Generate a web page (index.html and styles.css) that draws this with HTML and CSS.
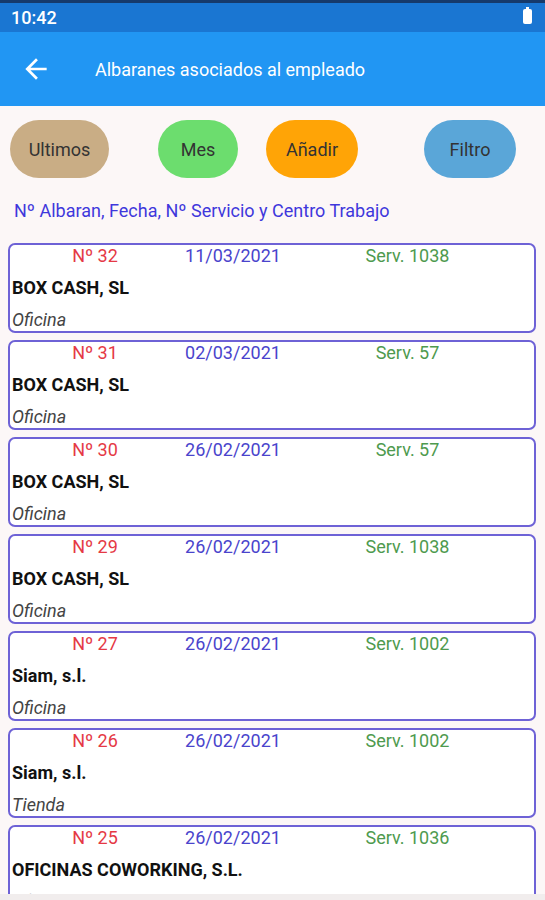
FILE: index.html
```html
<!DOCTYPE html>
<html lang="es">
<head>
    <meta charset="UTF-8">
    <meta name="viewport" content="width=device-width, initial-scale=1.0">
    <title>Albaranes asociados al empleado</title>
    <link rel="stylesheet" href="styles.css">
</head>
<body>
    <div class="screen">
        <div class="status-bar">
            <span class="clock">10:42</span>
            <span class="battery"></span>
        </div>

        <div class="app-bar">
            <svg class="back" width="32" height="32" viewBox="0 0 24 24">
                <path d="M20 11H7.83l5.59-5.59L12 4l-8 8 8 8 1.41-1.41L7.83 13H20v-2z" fill="#fff"/>
            </svg>
            <span class="title">Albaranes asociados al empleado</span>
        </div>

        <div class="content">
            <div class="buttons">
                <button class="pill btn-ultimos">Ultimos</button>
                <button class="pill btn-mes">Mes</button>
                <button class="pill btn-anadir">Añadir</button>
                <button class="pill btn-filtro">Filtro</button>
            </div>

            <p class="legend">Nº Albaran, Fecha, Nº Servicio y Centro Trabajo</p>

            <div class="list">
                <div class="card">
                    <div class="card-top"><span class="num">Nº 32</span><span class="date">11/03/2021</span><span class="serv">Serv. 1038</span></div>
                    <div class="client">BOX CASH, SL</div>
                    <div class="place">Oficina</div>
                </div>
                <div class="card">
                    <div class="card-top"><span class="num">Nº 31</span><span class="date">02/03/2021</span><span class="serv">Serv. 57</span></div>
                    <div class="client">BOX CASH, SL</div>
                    <div class="place">Oficina</div>
                </div>
                <div class="card">
                    <div class="card-top"><span class="num">Nº 30</span><span class="date">26/02/2021</span><span class="serv">Serv. 57</span></div>
                    <div class="client">BOX CASH, SL</div>
                    <div class="place">Oficina</div>
                </div>
                <div class="card">
                    <div class="card-top"><span class="num">Nº 29</span><span class="date">26/02/2021</span><span class="serv">Serv. 1038</span></div>
                    <div class="client">BOX CASH, SL</div>
                    <div class="place">Oficina</div>
                </div>
                <div class="card">
                    <div class="card-top"><span class="num">Nº 27</span><span class="date">26/02/2021</span><span class="serv">Serv. 1002</span></div>
                    <div class="client">Siam, s.l.</div>
                    <div class="place">Oficina</div>
                </div>
                <div class="card">
                    <div class="card-top"><span class="num">Nº 26</span><span class="date">26/02/2021</span><span class="serv">Serv. 1002</span></div>
                    <div class="client">Siam, s.l.</div>
                    <div class="place">Tienda</div>
                </div>
                <div class="card">
                    <div class="card-top"><span class="num">Nº 25</span><span class="date">26/02/2021</span><span class="serv">Serv. 1036</span></div>
                    <div class="client">OFICINAS COWORKING, S.L.</div>
                    <div class="place">Oficina</div>
                </div>
            </div>
        </div>
    </div>
</body>
</html>
```

FILE: styles.css
```css
body {
    margin: 0;
    font-family: Roboto, "Noto Sans", sans-serif;
    background-color: #f1eded;
}

.screen {
    width: 545px;
    height: 894px;
    overflow: hidden;
    background-color: #fcf7f7; /* fondo rosado claro */
    display: flex;
    flex-direction: column;
}

.status-bar {
    flex-shrink: 0;
    height: 29px;
    border-top: 3px solid #163a6b;
    background-color: #1a76d2;
    color: #fff;
    display: flex;
    align-items: center;
    justify-content: space-between;
    padding: 0 13px 0 11px;
}

.clock {
    font-size: 18px;
    font-weight: 500;
}

.battery {
    width: 9px;
    height: 15px;
    background-color: #fff;
    border-radius: 2px;
    position: relative;
    margin-bottom: 2px;
}

.battery::before {
    content: "";
    position: absolute;
    top: -2px;
    left: 3px;
    width: 3px;
    height: 2px;
    background-color: #fff;
}

.app-bar {
    flex-shrink: 0;
    height: 74px;
    background-color: #2196f3;
    display: flex;
    align-items: center;
    padding-left: 20px;
}

.back {
    width: 32px;
    height: 32px;
}

.title {
    color: #fff;
    font-size: 18px;
    margin-left: 43px;
}

.content {
    flex: 1;
    min-height: 0;
    overflow: hidden;
    padding: 14px 9px 0 8px;
}

.buttons {
    display: flex;
    height: 58px;
    padding-left: 2px;
}

.pill {
    flex-shrink: 0;
    height: 58px;
    border: none;
    border-radius: 29px;
    font-family: inherit;
    font-size: 18px;
    color: #333;
    padding: 0;
}

.btn-ultimos {
    width: 99px;
    background-color: #c9ad85;
}

.btn-mes {
    width: 80px;
    margin-left: 49px;
    background-color: #6cdd6e;
}

.btn-anadir {
    width: 92px;
    margin-left: 28px;
    background-color: #ffa406;
}

.btn-filtro {
    width: 92px;
    margin-left: 66px;
    background-color: #5aa6d8;
}

.legend {
    margin: 22px 0 0 6px;
    font-size: 18px;
    line-height: 22px;
    color: #3f37dc;
}

.list {
    margin-top: 21px;
    display: flex;
    flex-direction: column;
    gap: 7px;
}

.card {
    flex-shrink: 0;
    height: 86px;
    border: 2px solid #6e62d6;
    border-radius: 7px;
    background-color: #fff;
    padding-left: 2px;
}

.card-top {
    display: grid;
    grid-template-columns: 166px 110px 239px;
    font-size: 18px;
    line-height: 22px;
}

.num {
    text-align: center;
    color: #e53945;
}

.date {
    text-align: center;
    color: #4a44cc;
}

.serv {
    text-align: center;
    color: #4e9a4e;
}

.client {
    margin-top: 10px;
    font-size: 18px;
    font-weight: bold;
    line-height: 22px;
    color: #111;
}

.place {
    margin-top: 10px;
    font-size: 18px;
    font-style: italic;
    line-height: 22px;
    color: #444;
}
```
